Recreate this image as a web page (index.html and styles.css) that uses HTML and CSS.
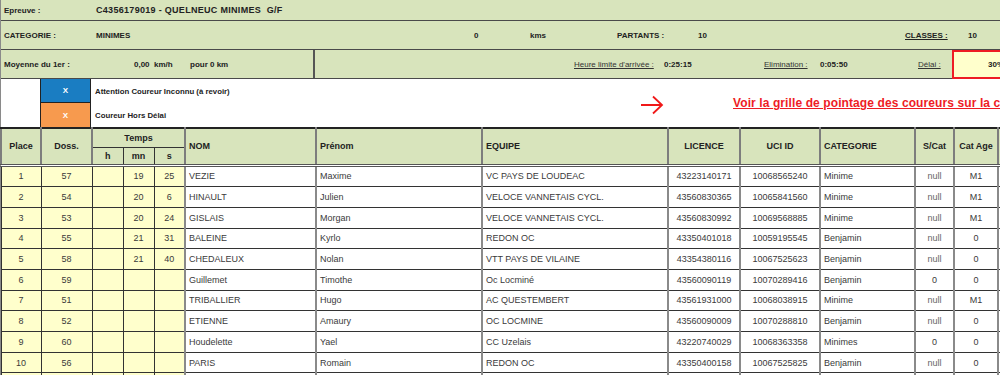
FILE: index.html
```html
<!DOCTYPE html>
<html lang="fr">
<head>
<meta charset="utf-8">
<title>Résultats</title>
<link rel="stylesheet" href="styles.css">
</head>
<body>
<div class="sheet">
  <div class="info r1">
    <span class="lbl w95">Epreuve :</span>
    <span class="b title">C4356179019 - QUELNEUC MINIMES&nbsp; G/F</span>
  </div>
  <div class="info r2">
    <span class="lbl w95">CATEGORIE :</span>
    <span class="b w378">MINIMES</span>
    <span class="b w56">0</span>
    <span class="b w87">kms</span>
    <span class="b w81">PARTANTS :</span>
    <span class="b w207">10</span>
    <span class="b u w63">CLASSES :</span>
    <span class="b">10</span>
  </div>
  <div class="info r3">
    <div class="avg">
      <span class="lbl w133">Moyenne du 1er :</span>
      <span class="b w56">0,00&nbsp; km/h</span>
      <span class="b">pour 0 km</span>
    </div>
    <div class="limits">
      <span class="u w90">Heure limite d'arrivée :</span>
      <span class="b w100">0:25:15</span>
      <span class="u w56">Elimination :</span>
      <span class="b w98">0:05:50</span>
      <span class="u w32">Délai :</span>
      <span class="delay b">30%</span>
    </div>
  </div>
  <div class="legend">
    <div class="blank"></div>
    <div class="swatch blue">X</div>
    <div class="ltext">Attention Coureur Inconnu (à revoir)</div>
    <div class="link">
      <svg class="arrow" width="24" height="20" viewBox="0 0 24 20"><path d="M1 10H22M13 1.5L22 10L13 18.5" fill="none" stroke="#f01818" stroke-width="1.8"/></svg>
      <a class="voir" href="#">Voir la grille de pointage des coureurs sur la course</a>
    </div>
    <div class="blank"></div>
    <div class="swatch orange">X</div>
    <div class="ltext">Coureur Hors Délai</div>
  </div>
  <table class="results">
    <colgroup>
      <col style="width:40px"><col style="width:51px"><col style="width:31px"><col style="width:31px"><col style="width:31px">
      <col style="width:131px"><col style="width:166px"><col style="width:186px"><col style="width:72px"><col style="width:80px">
      <col style="width:95px"><col style="width:39px"><col style="width:44px"><col style="width:60px">
    </colgroup>
    <thead>
      <tr class="ha">
        <th rowspan="2">Place</th>
        <th rowspan="2">Doss.</th>
        <th colspan="3" class="temps">Temps</th>
        <th rowspan="2" class="l">NOM</th>
        <th rowspan="2" class="l">Prénom</th>
        <th rowspan="2" class="l">EQUIPE</th>
        <th rowspan="2">LICENCE</th>
        <th rowspan="2">UCI ID</th>
        <th rowspan="2" class="l">CATEGORIE</th>
        <th rowspan="2">S/Cat</th>
        <th rowspan="2">Cat Age</th>
        <th rowspan="2"></th>
      </tr>
      <tr class="hb">
        <th>h</th><th>mn</th><th>s</th>
      </tr>
    </thead>
    <tbody>
      <tr><td class="y">1</td><td class="y">57</td><td class="y"></td><td class="y">19</td><td class="y">25</td><td class="w l">VEZIE</td><td class="w l">Maxime</td><td class="w l">VC PAYS DE LOUDEAC</td><td class="w">43223140171</td><td class="w">10068565240</td><td class="w l">Minime</td><td class="w g">null</td><td class="w">M1</td><td class="w"></td></tr>
      <tr><td class="y">2</td><td class="y">54</td><td class="y"></td><td class="y">20</td><td class="y">6</td><td class="w l">HINAULT</td><td class="w l">Julien</td><td class="w l">VELOCE VANNETAIS CYCL.</td><td class="w">43560830365</td><td class="w">10065841560</td><td class="w l">Minime</td><td class="w g">null</td><td class="w">M1</td><td class="w"></td></tr>
      <tr><td class="y">3</td><td class="y">53</td><td class="y"></td><td class="y">20</td><td class="y">24</td><td class="w l">GISLAIS</td><td class="w l">Morgan</td><td class="w l">VELOCE VANNETAIS CYCL.</td><td class="w">43560830992</td><td class="w">10069568885</td><td class="w l">Minime</td><td class="w g">null</td><td class="w">M1</td><td class="w"></td></tr>
      <tr><td class="y">4</td><td class="y">55</td><td class="y"></td><td class="y">21</td><td class="y">31</td><td class="w l">BALEINE</td><td class="w l">Kyrlo</td><td class="w l">REDON OC</td><td class="w">43350401018</td><td class="w">10059195545</td><td class="w l">Benjamin</td><td class="w g">null</td><td class="w">0</td><td class="w"></td></tr>
      <tr><td class="y">5</td><td class="y">58</td><td class="y"></td><td class="y">21</td><td class="y">40</td><td class="w l">CHEDALEUX</td><td class="w l">Nolan</td><td class="w l">VTT PAYS DE VILAINE</td><td class="w">43354380116</td><td class="w">10067525623</td><td class="w l">Benjamin</td><td class="w g">null</td><td class="w">0</td><td class="w"></td></tr>
      <tr><td class="y">6</td><td class="y">59</td><td class="y"></td><td class="y"></td><td class="y"></td><td class="w l">Guillemet</td><td class="w l">Timothe</td><td class="w l">Oc Locminé</td><td class="w">43560090119</td><td class="w">10070289416</td><td class="w l">Benjamin</td><td class="w">0</td><td class="w">0</td><td class="w"></td></tr>
      <tr><td class="y">7</td><td class="y">51</td><td class="y"></td><td class="y"></td><td class="y"></td><td class="w l">TRIBALLIER</td><td class="w l">Hugo</td><td class="w l">AC QUESTEMBERT</td><td class="w">43561931000</td><td class="w">10068038915</td><td class="w l">Minime</td><td class="w g">null</td><td class="w">M1</td><td class="w"></td></tr>
      <tr><td class="y">8</td><td class="y">52</td><td class="y"></td><td class="y"></td><td class="y"></td><td class="w l">ETIENNE</td><td class="w l">Amaury</td><td class="w l">OC LOCMINE</td><td class="w">43560090009</td><td class="w">10070288810</td><td class="w l">Benjamin</td><td class="w g">null</td><td class="w">0</td><td class="w"></td></tr>
      <tr><td class="y">9</td><td class="y">60</td><td class="y"></td><td class="y"></td><td class="y"></td><td class="w l">Houdelette</td><td class="w l">Yael</td><td class="w l">CC Uzelais</td><td class="w">43220740029</td><td class="w">10068363358</td><td class="w l">Minimes</td><td class="w">0</td><td class="w">0</td><td class="w"></td></tr>
      <tr><td class="y">10</td><td class="y">56</td><td class="y"></td><td class="y"></td><td class="y"></td><td class="w l">PARIS</td><td class="w l">Romain</td><td class="w l">REDON OC</td><td class="w">43350400158</td><td class="w">10067525825</td><td class="w l">Benjamin</td><td class="w g">null</td><td class="w">0</td><td class="w"></td></tr>
      <tr><td class="y"></td><td class="y"></td><td class="y"></td><td class="y"></td><td class="y"></td><td class="w l"></td><td class="w l"></td><td class="w l"></td><td class="w"></td><td class="w"></td><td class="w l"></td><td class="w"></td><td class="w"></td><td class="w"></td></tr>
    </tbody>
  </table>
</div>
</body>
</html>
```

FILE: styles.css
```css
html, body {
  margin: 0;
  padding: 0;
  background: #ffffff;
  overflow: hidden;
}

.sheet {
  width: 1060px;
  font-family: "Liberation Sans", Arial, sans-serif;
  color: #222;
  border-left: 1px solid #8a8a8a;
}

.info {
  display: flex;
  align-items: center;
  background: #d8e4bc;
  border-bottom: 1px solid #4a4a4a;
  box-sizing: border-box;
  font-size: 8px;
  white-space: nowrap;
}

.info span { flex: none; }

.r1 { height: 21px; padding-left: 3px; }
.r2 { height: 29px; padding-left: 3px; }
.r3 { height: 29px; align-items: stretch; }

.lbl { font-weight: bold; }
.b { font-weight: bold; }
.title { font-size: 9px; letter-spacing: 0.3px; }
.u { text-decoration: underline; color: #333; }
.u.b { color: #222; }

.w95 { width: 92px; }
.w378 { width: 378px; }
.w56 { width: 56px; }
.w87 { width: 87px; }
.w81 { width: 81px; }
.w207 { width: 207px; }
.w63 { width: 63px; }
.w133 { width: 130px; }
.w90 { width: 90px; }
.w100 { width: 100px; }
.w98 { width: 98px; }
.w32 { width: 32px; }

.avg {
  width: 314px;
  padding-left: 3px;
  box-sizing: border-box;
  display: flex;
  align-items: center;
  border-right: 2px solid #555;
}

.limits {
  display: flex;
  align-items: center;
  padding-left: 259px;
}

.delay {
  align-self: stretch;
  width: 80px;
  margin-bottom: -1px;
  margin-left: 2px;
  box-sizing: border-box;
  border: 2px solid #ee1c25;
  background: #ffffcc;
  display: flex;
  align-items: center;
  padding-left: 34px;
  font-size: 8px;
}

.legend {
  display: grid;
  grid-template-columns: 39px 51px 549px 1fr;
  grid-template-rows: 24px 24px;
  background: #fff;
  font-size: 7.8px;
  font-weight: bold;
}

.swatch {
  display: flex;
  align-items: center;
  justify-content: center;
  color: #fff;
  font-size: 8px;
  font-weight: bold;
  border-left: 1px solid #222;
  border-right: 1px solid #222;
  box-sizing: border-box;
}

.blue { background: #1a7dc2; border-bottom: 1px solid #222; }
.orange { background: #f79a4e; }

.ltext {
  display: flex;
  align-items: center;
  padding-left: 4px;
  white-space: nowrap;
}

.link {
  grid-column: 4;
  grid-row: 1 / span 2;
  display: flex;
  align-items: center;
  white-space: nowrap;
}

.arrow { flex: none; margin-top: 3px; }

.voir {
  margin-left: 69px;
  color: #ee1c25;
  font-size: 12px;
  font-weight: bold;
  text-decoration: underline;
  letter-spacing: 0.1px;
}

.results {
  border-collapse: collapse;
  table-layout: fixed;
  width: 1057px;
  margin-left: -1px;
  font-size: 9px;
}

.results th {
  background: #d8e4bc;
  font-weight: bold;
  font-size: 9px;
  color: #222;
  border: 2px solid #7d7d7d;
  padding: 0 3px;
  text-align: center;
  white-space: nowrap;
}

.results thead tr.ha th { border-top: 2px solid #222; }
.results thead tr.ha { height: 19px; }
.results thead tr.hb { height: 18px; }
.results thead tr.hb th { border-top: 1px solid #333; border-left: 1px solid #333; border-right: 1px solid #333; }
.results thead th { border-bottom: 3px double #555; }
.results thead tr.ha th.temps { border-bottom: 1px solid #333; }

.results th.l, .results td.l { text-align: left; }

.results td {
  height: 19.7px;
  padding: 0 3px;
  border: 1px solid #333;
  color: #3a3a3a;
  text-align: center;
  white-space: nowrap;
  overflow: hidden;
}

.results td.y { background: #ffffcc; }
.results td.w { background: #fff; border-left: 2px solid #8a8a8a; border-right: 2px solid #8a8a8a; }
.results td.g { color: #666; }
```
